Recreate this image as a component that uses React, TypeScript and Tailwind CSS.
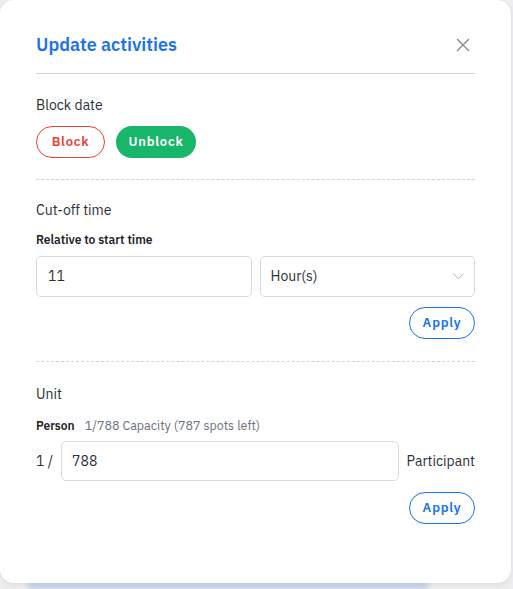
import React from "react";

const font = { fontFamily: '"IBM Plex Sans", Inter, "Noto Sans", sans-serif' };

const ApplyButton: React.FC = () => (
  <div className="flex justify-end">
    <button className="h-[32px] w-[66px] rounded-full border border-[#1a73e8] text-[13px] font-semibold tracking-[0.06em] text-[#1a73e8]">
      Apply
    </button>
  </div>
);

const App: React.FC = () => {
  return (
    <div className="relative h-[589px] w-[513px] overflow-hidden bg-[#eeeef0]" style={font}>
      {/* blurred background strip peeking under the card */}
      <div className="absolute bottom-0 left-[28px] h-[8px] w-[400px] bg-[#c9d6ec] blur-[2px]" />
      <div className="relative flex h-[583px] w-[511px] flex-col rounded-[14px] bg-white px-[36px] pt-[31px] shadow-[0_2px_6px_rgba(0,0,0,0.08)]">
        <div className="flex items-center justify-between pb-[15px]">
          <h1 className="text-[18px] font-semibold text-[#1a73e8]">Update activities</h1>
          <svg width="14" height="14" viewBox="0 0 14 14" className="mr-[5px]">
            <path d="M1 1L13 13M13 1L1 13" stroke="#8a8a8e" strokeWidth="1.4" />
          </svg>
        </div>
        <div className="h-px bg-[#d2d2d7]" />

        <div className="pt-[21px] text-[14px] text-[#2b2f36]">Block date</div>
        <div className="mt-[10px] flex gap-[11px]">
          <button className="h-[32px] w-[69px] rounded-full border border-[#ea4335] text-[13px] font-semibold tracking-[0.06em] text-[#ea4335]">
            Block
          </button>
          <button className="h-[32px] w-[80px] rounded-full bg-[#17b66a] text-[13px] font-semibold tracking-[0.06em] text-white">
            Unblock
          </button>
        </div>
        <div className="mt-[21px] border-t border-dashed border-[#d2d2d7]" />

        <div className="pt-[20px] text-[14px] text-[#2b2f36]">Cut-off time</div>
        <div className="mt-[10px] text-[12px] font-semibold text-[#1f2329]">Relative to start time</div>
        <div className="mt-[7px] grid grid-cols-2 gap-[8px]">
          <div className="flex h-[41px] items-center rounded-[5px] border border-[#d9d9de] px-[11px] text-[14px] text-[#2b2f36]">
            11
          </div>
          <div className="flex h-[41px] items-center justify-between rounded-[5px] border border-[#d9d9de] pl-[10px] pr-[10px] text-[14px] text-[#2b2f36]">
            <span>Hour(s)</span>
            <svg width="11" height="7" viewBox="0 0 11 7">
              <path d="M0.5 0.5L5.5 6L10.5 0.5" fill="none" stroke="#b5b5ba" strokeWidth="1" />
            </svg>
          </div>
        </div>
        <div className="mt-[10px]">
          <ApplyButton />
        </div>
        <div className="mt-[22px] border-t border-dashed border-[#d2d2d7]" />

        <div className="pt-[22px] text-[14px] text-[#2b2f36]">Unit</div>
        <div className="mt-[11px] flex items-baseline gap-[10px]">
          <span className="text-[12px] font-semibold text-[#1f2329]">Person</span>
          <span className="text-[12.5px] text-[#6b7080]">1/788 Capacity (787 spots left)</span>
        </div>
        <div className="mt-[6px] flex items-center gap-[8px] text-[14px] text-[#2b2f36]">
          <span className="whitespace-nowrap">1 /</span>
          <div className="flex h-[40px] flex-1 items-center rounded-[5px] border border-[#d9d9de] px-[10px]">788</div>
          <span>Participant</span>
        </div>
        <div className="mt-[11px]">
          <ApplyButton />
        </div>
      </div>
    </div>
  );
};

export default App;
